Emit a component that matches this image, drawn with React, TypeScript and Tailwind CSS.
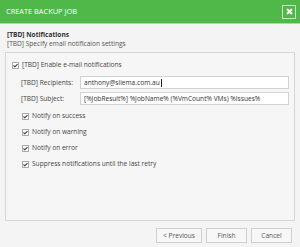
import React from "react";

function Check() {
  return (
    <span className="flex h-[7px] w-[7px] items-center justify-center border border-[#a9a9a9] bg-white">
      <svg width="6" height="5" viewBox="0 0 6 5">
        <path d="M0.6 2.5 L2.3 4.1 L5.4 0.8" fill="none" stroke="#3a3a3a" strokeWidth="1.3" />
      </svg>
    </span>
  );
}

export default function App() {
  const font = { fontFamily: '"Open Sans", "Noto Sans", sans-serif' };
  return (
    <div className="h-[247px] w-[300px] bg-[#f4f4f4] text-[#444]" style={font}>
      <div className="flex h-[24px] items-center justify-between border-b border-[#a6dca3] bg-[#50b848] pl-[6px] pr-[4px]">
        <span className="text-[7.4px] leading-none text-white">CREATE BACKUP JOB</span>
        <span className="flex h-[14px] w-[14px] items-center justify-center border border-[#c6e9c4]">
          <svg width="7" height="7" viewBox="0 0 7 7">
            <path d="M1 1 L6 6 M6 1 L1 6" stroke="white" strokeWidth="1.8" />
          </svg>
        </span>
      </div>
      <div className="px-[7px] pt-[6px]">
        <div className="text-[6.6px] font-bold leading-[9px] text-[#333]">[TBD] Notifications</div>
        <div className="text-[6.6px] leading-[9px] text-[#555]">[TBD] Specify email notificaion settings</div>
      </div>
      <div className="mx-[5px] mt-[4px] h-[169px] border border-[#d6d6d6] bg-[#f6f6f6] pl-[6px] pr-[5px] pt-[7px] text-[6.6px] text-[#444]">
        <div className="flex h-[10px] items-center gap-[3px]">
          <Check />
          <span>[TBD] Enable e-mail notifications</span>
        </div>
        <div className="mt-[6px] flex h-[13px] items-center">
          <span className="w-[68px] shrink-0 whitespace-nowrap pl-[9px]">[TBD] Recipients:</span>
          <div className="flex h-[13px] flex-1 items-center whitespace-nowrap border border-[#d2d2d2] bg-white pl-[3px] text-[#333]">
            anthony@sliema.com.au<span className="ml-[1px] inline-block h-[8px] w-px bg-[#222]" />
          </div>
        </div>
        <div className="mt-[3px] flex h-[13px] items-center">
          <span className="w-[68px] shrink-0 whitespace-nowrap pl-[9px]">[TBD] Subject:</span>
          <div className="flex h-[13px] flex-1 items-center whitespace-nowrap border border-[#d2d2d2] bg-white pl-[3px] text-[#333]">
            [%JobResult%] %JobName% (%VmCount% VMs) %Issues%
          </div>
        </div>
        <div className="mt-[3px] flex flex-col pl-[10px]">
          {[
            "Notify on success",
            "Notify on warning",
            "Notify on error",
            "Suppress notifications until the last retry",
          ].map((t) => (
            <div key={t} className="flex h-[16px] items-center gap-[3px]">
              <Check />
              <span>{t}</span>
            </div>
          ))}
        </div>
      </div>
      <div className="mt-[7px] flex justify-end gap-[4px] pr-[8px]">
        {["< Previous", "Finish", "Cancel"].map((t) => (
          <button
            key={t}
            className="flex h-[15px] min-w-[41px] items-center justify-center border border-[#cfcfcf] bg-[#f7f7f7] px-[6px] text-[6.6px] text-[#555]"
          >
            {t}
          </button>
        ))}
      </div>
    </div>
  );
}
